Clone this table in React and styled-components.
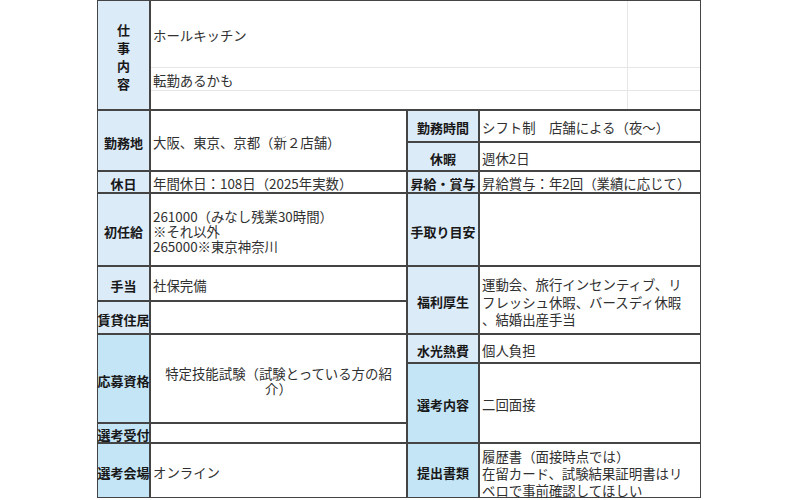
import React from "react";
import styled, { createGlobalStyle, css } from "styled-components";

const GlobalStyle = createGlobalStyle`
  html, body {
    margin: 0;
    padding: 0;
    background: #ffffff;
  }
  body {
    font-family: "Noto Sans CJK JP", "Noto Sans", sans-serif;
    font-size: 13px;
    color: #222;
  }
`;

const Page = styled.div`
  width: 800px;
  height: 500px;
  padding-left: 97px;
  box-sizing: border-box;
  overflow: hidden;
`;

const Sheet = styled.div`
  display: grid;
  width: 604px;
  box-sizing: border-box;
  padding: 1px;
  gap: 2px;
  background: #444444;
  grid-template-columns: 51px 255px 70px 220px;
  grid-template-rows: 108px 30px 27px 20px 71px 33px 31px 27px 58px 18px 53px;
`;

const place = css`
  grid-column: ${(p) => p.$col};
  grid-row: ${(p) => p.$row};
`;

const Label = styled.div`
  ${place};
  display: flex;
  align-items: center;
  justify-content: center;
  padding-top: 3px;
  box-sizing: border-box;
  background: ${(p) => (p.$tone === "cyan" ? "#c3e5f6" : "#dcebf8")};
  font-weight: 700;
  color: #181818;
  white-space: nowrap;
  line-height: 15px;
  overflow: visible;
`;

const StackLabel = styled(Label)`
  padding-top: 4px;
  span {
    display: block;
    width: 13px;
    line-height: 18px;
    word-break: break-all;
    white-space: normal;
    text-align: center;
  }
`;

const Value = styled.div`
  ${place};
  display: flex;
  align-items: center;
  justify-content: ${(p) => (p.$center ? "center" : "flex-start")};
  text-align: ${(p) => (p.$center ? "center" : "left")};
  padding: ${(p) => p.$pad || "3px 0 0 2px"};
  box-sizing: border-box;
  background: #ffffff;
  color: #303030;
  font-size: 13.4px;
  line-height: ${(p) => p.$lh || "15px"};
  white-space: nowrap;
`;

const JobCell = styled.div`
  ${place};
  display: grid;
  grid-template-columns: 476px 1fr;
  grid-template-rows: 66px 22px 1fr;
  gap: 1px;
  background: #e6e6e6;
`;

const JobLine = styled.div`
  display: flex;
  align-items: center;
  padding: 2px 0 0 2px;
  background: #ffffff;
  color: #303030;
  font-size: 13.4px;
  white-space: nowrap;
`;

const Blank = styled.div`
  background: #ffffff;
`;

export default function App() {
  return (
    <>
      <GlobalStyle />
      <Page>
        <Sheet>
          <StackLabel $col="1" $row="1">
            <span>仕事内容</span>
          </StackLabel>
          <JobCell $col="2 / 5" $row="1">
            <JobLine>ホールキッチン</JobLine>
            <Blank />
            <JobLine>転勤あるかも</JobLine>
            <Blank />
            <Blank />
            <Blank />
          </JobCell>

          <Label $col="1" $row="2 / 4">勤務地</Label>
          <Value $col="2" $row="2 / 4">大阪、東京、京都（新２店舗）</Value>
          <Label $col="3" $row="2">勤務時間</Label>
          <Value $col="4" $row="2">シフト制　店舗による（夜～）</Value>
          <Label $col="3" $row="3">休暇</Label>
          <Value $col="4" $row="3">週休2日</Value>

          <Label $col="1" $row="4">休日</Label>
          <Value $col="2" $row="4">年間休日：108日（2025年実数）</Value>
          <Label $col="3" $row="4">昇給・賞与</Label>
          <Value $col="4" $row="4">昇給賞与：年2回（業績に応じて）</Value>

          <Label $col="1" $row="5">初任給</Label>
          <Value $col="2" $row="5">
            <div>
              261000（みなし残業30時間）
              <br />
              ※それ以外
              <br />
              265000※東京神奈川
            </div>
          </Value>
          <Label $col="3" $row="5">手取り目安</Label>
          <Value $col="4" $row="5" />

          <Label $col="1" $row="6">手当</Label>
          <Value $col="2" $row="6">社保完備</Value>
          <Label $col="1" $row="7">賃貸住居</Label>
          <Value $col="2" $row="7" />
          <Label $col="3" $row="6 / 8">福利厚生</Label>
          <Value $col="4" $row="6 / 8" $lh="17.5px" $pad="5px 0 0 2px">
            <div>
              運動会、旅行インセンティブ、リ
              <br />
              フレッシュ休暇、バースディ休暇
              <br />
              、結婚出産手当
            </div>
          </Value>

          <Label $col="1" $row="8 / 10" $tone="cyan">応募資格</Label>
          <Value $col="2" $row="8 / 10" $center $pad="4px 0 0 0">
            <div>
              特定技能試験（試験とっている方の紹
              <br />
              介）
            </div>
          </Value>
          <Label $col="3" $row="8">水光熱費</Label>
          <Value $col="4" $row="8">個人負担</Value>

          <Label $col="3" $row="9 / 11" $tone="cyan">選考内容</Label>
          <Value $col="4" $row="9 / 11">二回面接</Value>

          <Label $col="1" $row="10" $tone="cyan">選考受付</Label>
          <Value $col="2" $row="10" />

          <Label $col="1" $row="11" $tone="cyan">選考会場</Label>
          <Value $col="2" $row="11">オンライン</Value>
          <Label $col="3" $row="11" $tone="cyan">提出書類</Label>
          <Value $col="4" $row="11" $lh="17px" $pad="6px 0 0 2px">
            <div>
              履歴書（面接時点では）
              <br />
              在留カード、試験結果証明書はリ
              <br />
              ベロで事前確認してほしい
            </div>
          </Value>
        </Sheet>
      </Page>
    </>
  );
}
